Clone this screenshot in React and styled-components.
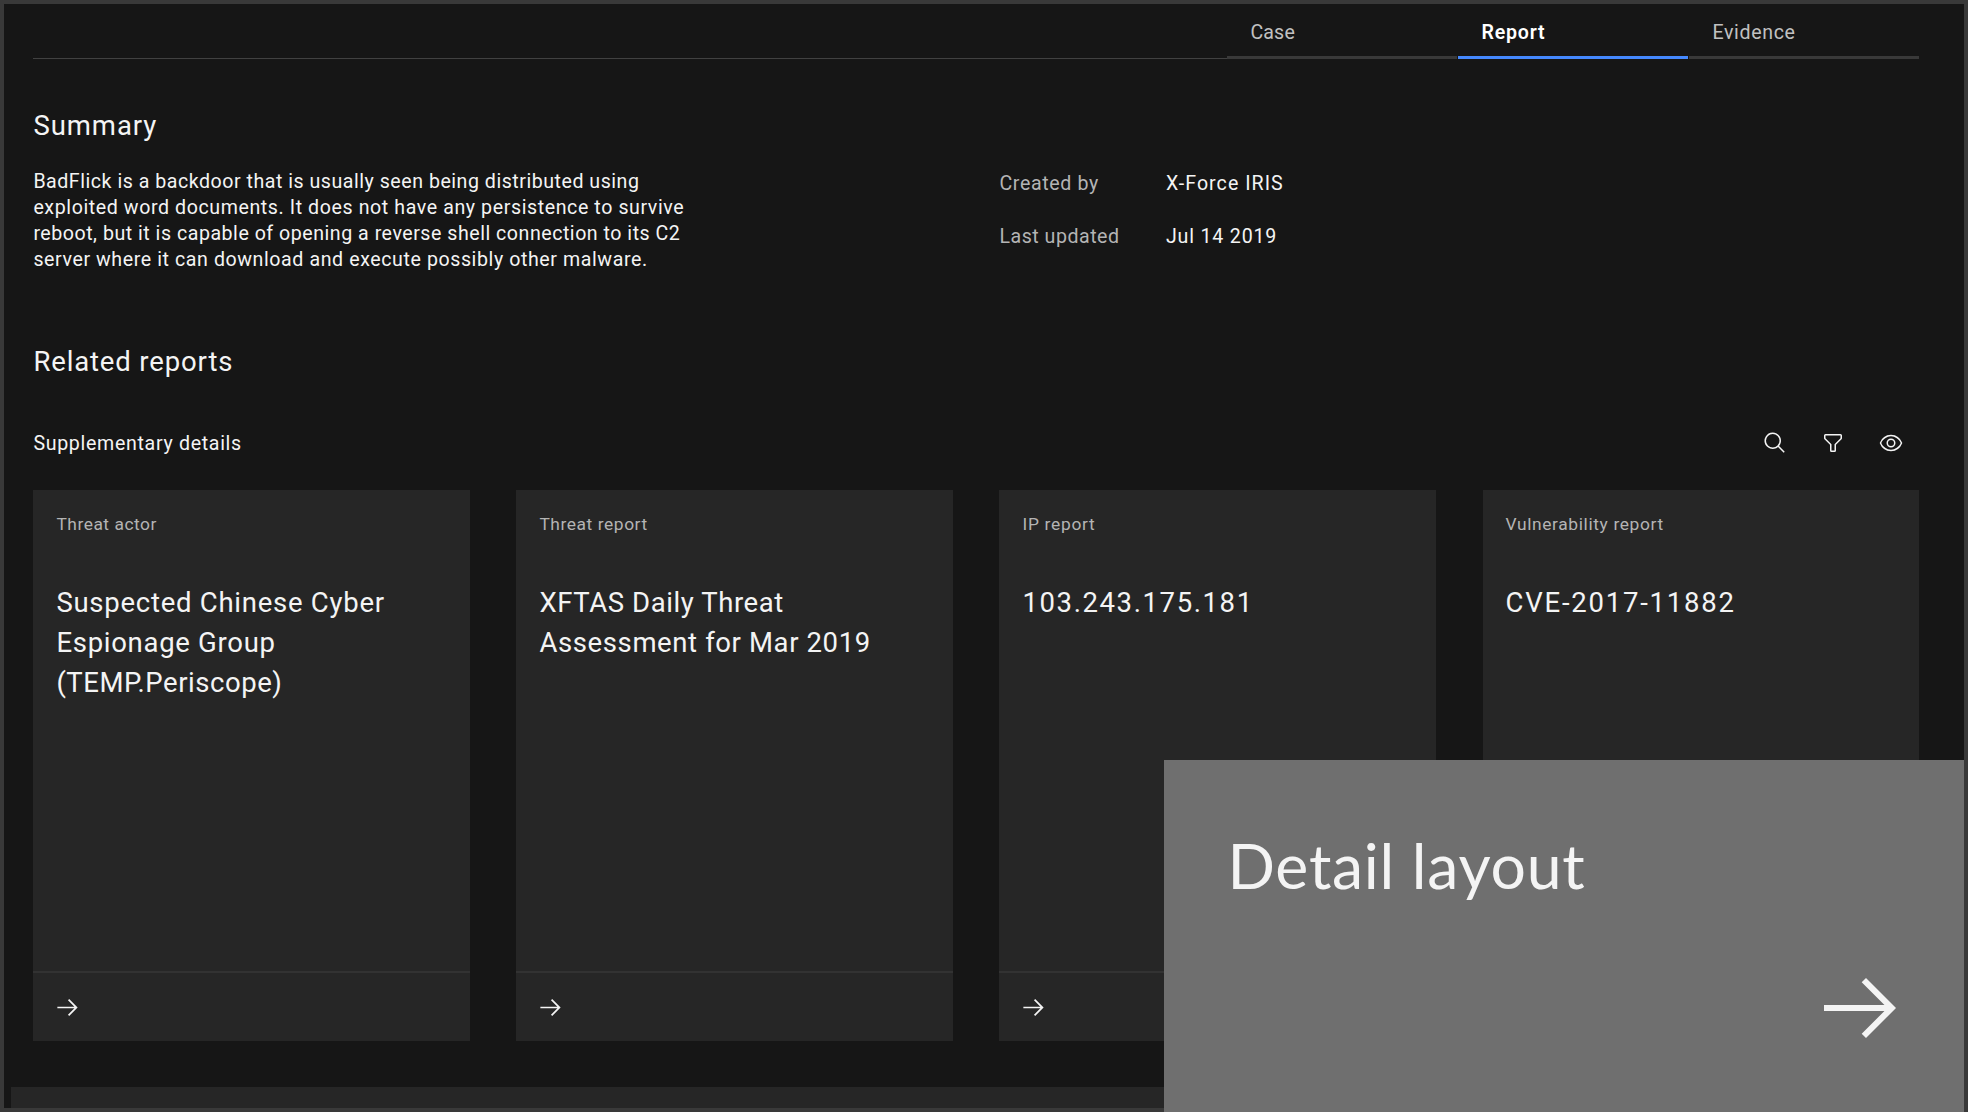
import React from "react";
import styled, { createGlobalStyle } from "styled-components";

const GlobalStyle = createGlobalStyle`
  * { box-sizing: border-box; }
  html, body { margin: 0; background: #161616; overflow: hidden; }
  h2, h3, p, dl, dt, dd { margin: 0; font-weight: 400; }
`;

const Frame = styled.main`
  position: relative;
  width: 1968px;
  height: 1112px;
  border: 4px solid #393939;
  background: #161616;
  color: #f4f4f4;
  font-family: Roboto, "Noto Sans", sans-serif;
  display: flex;
  flex-direction: column;
`;

const Page = styled.div`
  flex: 1;
  padding: 0 44.6px 0 29.4px;
  display: flex;
  flex-direction: column;
`;

const Line = styled.span`
  display: block;
  width: max-content;
  white-space: nowrap;
  letter-spacing: ${(p) => p.$track || 0}px;
`;

const TabBar = styled.nav`
  display: flex;
  align-items: flex-end;
  height: 55px;
`;

const TabRule = styled.div`
  flex: 1;
  height: 1px;
  background: #414141;
`;

const Tabs = styled.div`
  display: grid;
  grid-template-columns: 230px 230px 230.5px;
  column-gap: 1px;
`;

const Tab = styled.div`
  height: 55px;
  padding: 16px 0 0 23.5px;
  font-size: 19.6px;
  line-height: 26px;
  font-weight: ${(p) => (p.$active ? 600 : 400)};
  color: ${(p) => (p.$active ? "#ffffff" : "#c1c1c1")};
  border-bottom: 3px solid ${(p) => (p.$active ? "#4589ff" : "#393939")};
`;

const SummaryRow = styled.section`
  display: grid;
  grid-template-columns: 966px 1fr;
  height: 226px;
  padding-top: 47px;
`;

const Heading = styled.h2`
  font-size: 27.5px;
  line-height: 40px;
`;

const Paragraph = styled.p`
  margin-top: 23.4px;
  font-size: 19.6px;
  line-height: 25.75px;
`;

const Facts = styled.dl`
  display: grid;
  grid-template-columns: 166.5px 1fr;
  grid-auto-rows: 53px;
  padding-top: 65px;
  font-size: 19.6px;
  line-height: 26px;
`;

const Term = styled.dt`
  color: #b4b4b4;
`;

const Value = styled.dd`
  color: #f4f4f4;
`;

const RelatedSection = styled.section`
  display: flex;
  flex-direction: column;
  padding-top: 57px;
`;

const Toolbar = styled.div`
  display: flex;
  align-items: center;
  justify-content: space-between;
  height: 28px;
  margin-top: 47px;
  padding-right: 16.8px;
  font-size: 19.6px;
  line-height: 26px;
`;

const ToolbarLabel = styled.div`
  padding-top: 1px;
`;

const Actions = styled.div`
  display: flex;
  gap: 33.6px;
`;

const Icon = styled.svg`
  display: block;
  width: ${(p) => p.$size}px;
  height: ${(p) => p.$size}px;
  fill: ${(p) => p.$color || "#f4f4f4"};
`;

const CardGrid = styled.div`
  display: grid;
  grid-template-columns: repeat(4, 1fr);
  column-gap: 46.2px;
  margin-top: 33px;
`;

const Card = styled.article`
  height: 551px;
  background: #262626;
  display: flex;
  flex-direction: column;
`;

const CardBody = styled.div`
  flex: 1;
  padding: 22px 23px 0;
`;

const CardLabel = styled.p`
  font-size: 17.4px;
  line-height: 24px;
  color: #b4b4b4;
`;

const CardTitle = styled.h3`
  margin-top: 46.5px;
  font-size: 27.5px;
  line-height: 40.1px;
`;

const CardFooter = styled.div`
  height: 70px;
  padding-left: 21px;
  border-top: 2px solid #323232;
  display: flex;
  align-items: center;
`;

const NextPanel = styled.div`
  height: 21px;
  margin-left: 7px;
  background: #262626;
`;

const Banner = styled.aside`
  position: absolute;
  right: 0;
  bottom: -4px;
  width: 800px;
  height: 352px;
  padding: 63px 56px 56px 63.5px;
  background: #6f6f6f;
  display: flex;
  flex-direction: column;
  justify-content: space-between;
`;

const BannerTitle = styled.h2`
  font-family: Lato, "Open Sans", sans-serif;
  font-size: 62.5px;
  line-height: 84px;
  font-weight: 400;
  color: #f4f4f4;
`;

const BannerAction = styled.div`
  display: flex;
  justify-content: flex-end;
`;

const paths = {
  search: [
    "M29,27.5859l-7.5521-7.5521a11.0177,11.0177,0,1,0-1.4141,1.4141L27.5859,29ZM4,13a9,9,0,1,1,9,9A9.01,9.01,0,0,1,4,13Z",
  ],
  filter: [
    "M18,28H14a2,2,0,0,1-2-2V18.41L4.59,11A2,2,0,0,1,4,9.59V6A2,2,0,0,1,6,4H26a2,2,0,0,1,2,2V9.59A2,2,0,0,1,27.41,11L20,18.41V26A2,2,0,0,1,18,28ZM6,6V9.59l8,8V26h4V17.59l8-8V6Z",
  ],
  view: [
    "M30.94,15.66A16.69,16.69,0,0,0,16,5,16.69,16.69,0,0,0,1.06,15.66a1,1,0,0,0,0,.68A16.69,16.69,0,0,0,16,27,16.69,16.69,0,0,0,30.94,16.34,1,1,0,0,0,30.94,15.66ZM16,25c-5.3,0-10.9-3.93-12.93-9C5.1,10.93,10.7,7,16,7s10.9,3.93,12.93,9C26.9,21.07,21.3,25,16,25Z",
    "M16,10a6,6,0,1,0,6,6A6,6,0,0,0,16,10Zm0,10a4,4,0,1,1,4-4A4,4,0,0,1,16,20Z",
  ],
  arrow: ["M18 6 16.57 7.393 24.15 15 4 15 4 17 24.15 17 16.57 24.573 18 26 28 16 18 6z"],
};

function Glyph({ name, size = 24, color }) {
  return (
    <Icon viewBox="0 0 32 32" $size={size} $color={color} aria-hidden="true">
      {paths[name].map((d) => (
        <path key={d} d={d} />
      ))}
    </Icon>
  );
}

const tabs = [
  { text: "Case", track: 0.15 },
  { text: "Report", track: 0.8, active: true },
  { text: "Evidence", track: 0.65 },
];

const summary = [
  { text: "BadFlick is a backdoor that is usually seen being distributed using", track: 0.52 },
  { text: "exploited word documents. It does not have any persistence to survive", track: 0.59 },
  { text: "reboot, but it is capable of opening a reverse shell connection to its C2", track: 0.52 },
  { text: "server where it can download and execute possibly other malware.", track: 0.585 },
];

const facts = [
  { term: "Created by", termTrack: 0.65, value: "X-Force IRIS", valueTrack: 1.04 },
  { term: "Last updated", termTrack: 0.52, value: "Jul 14 2019", valueTrack: 0.83 },
];

const cards = [
  {
    label: "Threat actor",
    track: 0.52,
    title: [
      { text: "Suspected Chinese Cyber", track: 0.74 },
      { text: "Espionage Group", track: 0.71 },
      { text: "(TEMP.Periscope)", track: 0.54 },
    ],
  },
  {
    label: "Threat report",
    track: 0.56,
    title: [
      { text: "XFTAS Daily Threat", track: 0.58 },
      { text: "Assessment for Mar 2019", track: 0.61 },
    ],
  },
  { label: "IP report", track: 0.7, title: [{ text: "103.243.175.181", track: 1.6 }] },
  { label: "Vulnerability report", track: 0.62, title: [{ text: "CVE-2017-11882", track: 1.78 }] },
];

export default function App() {
  return (
    <Frame>
      <GlobalStyle />
      <Page>
        <TabBar>
          <TabRule />
          <Tabs>
            {tabs.map((t) => (
              <Tab key={t.text} $active={t.active}>
                <Line $track={t.track}>{t.text}</Line>
              </Tab>
            ))}
          </Tabs>
        </TabBar>
        <SummaryRow>
          <div>
            <Heading>
              <Line $track={0.95}>Summary</Line>
            </Heading>
            <Paragraph>
              {summary.map((l) => (
                <Line key={l.text} $track={l.track}>{l.text}</Line>
              ))}
            </Paragraph>
          </div>
          <Facts>
            {facts.map((f) => (
              <React.Fragment key={f.term}>
                <Term><Line $track={f.termTrack}>{f.term}</Line></Term>
                <Value><Line $track={f.valueTrack}>{f.value}</Line></Value>
              </React.Fragment>
            ))}
          </Facts>
        </SummaryRow>
        <RelatedSection>
          <Heading>
            <Line $track={0.86}>Related reports</Line>
          </Heading>
          <Toolbar>
            <ToolbarLabel>
              <Line $track={0.68}>Supplementary details</Line>
            </ToolbarLabel>
            <Actions>
              <Glyph name="search" />
              <Glyph name="filter" />
              <Glyph name="view" />
            </Actions>
          </Toolbar>
          <CardGrid>
            {cards.map((c) => (
              <Card key={c.label}>
                <CardBody>
                  <CardLabel><Line $track={c.track}>{c.label}</Line></CardLabel>
                  <CardTitle>
                    {c.title.map((l) => (
                      <Line key={l.text} $track={l.track}>{l.text}</Line>
                    ))}
                  </CardTitle>
                </CardBody>
                <CardFooter>
                  <Glyph name="arrow" size={27} />
                </CardFooter>
              </Card>
            ))}
          </CardGrid>
        </RelatedSection>
      </Page>
      <NextPanel />
      <Banner>
        <BannerTitle>
          <Line $track={0.75}>Detail layout</Line>
        </BannerTitle>
        <BannerAction>
          <Glyph name="arrow" size={96} />
        </BannerAction>
      </Banner>
    </Frame>
  );
}
